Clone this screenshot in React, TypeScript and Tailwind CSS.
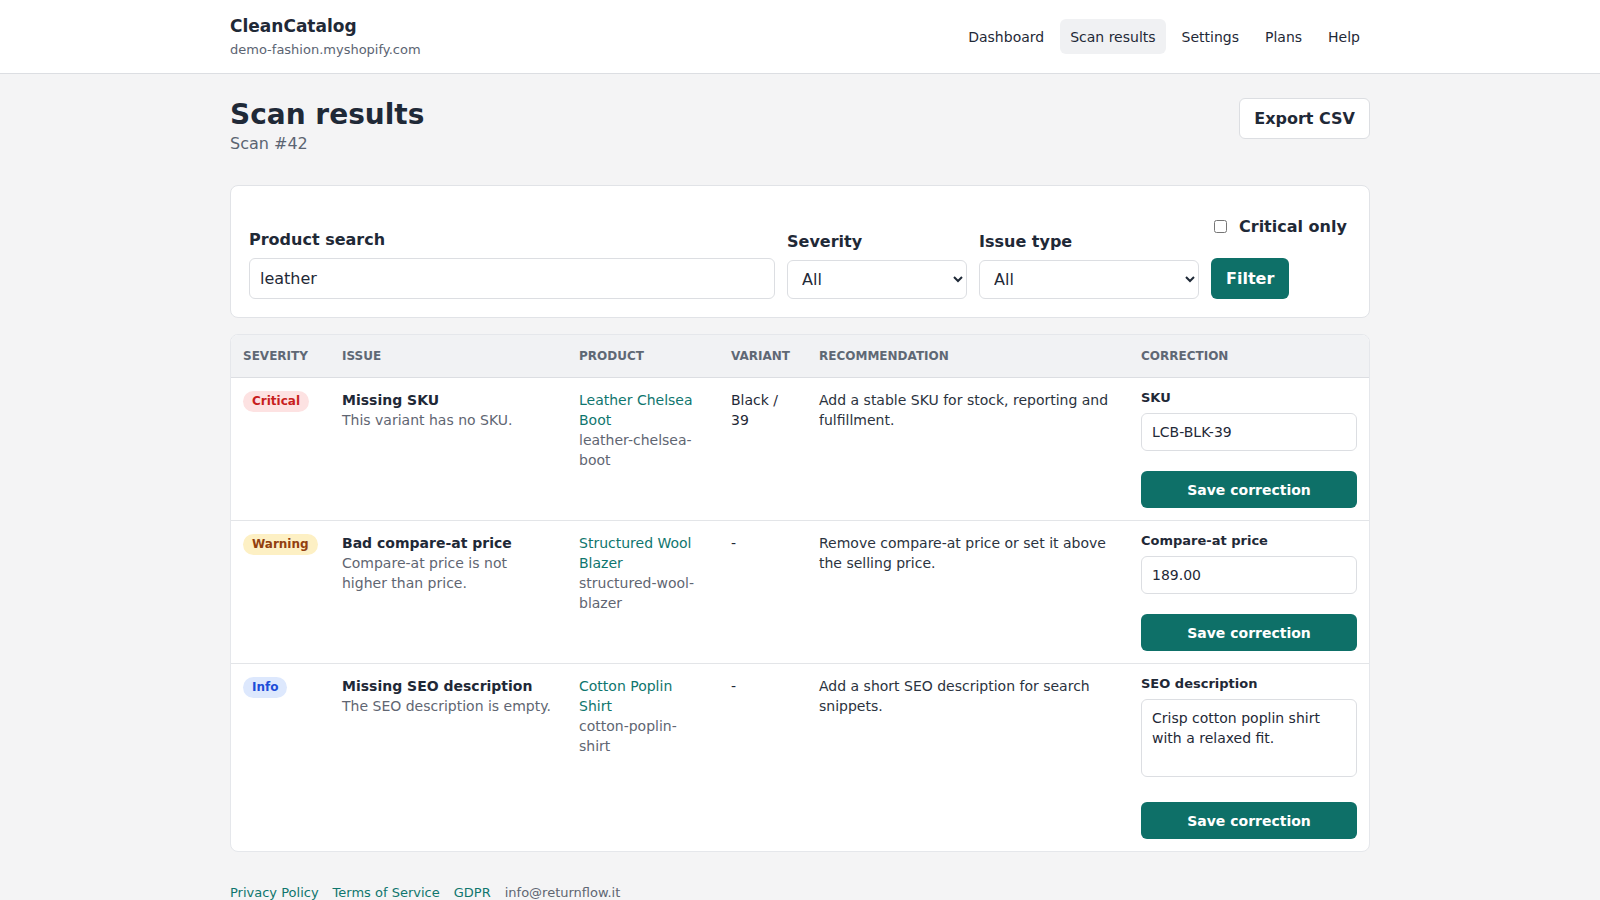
import React from 'react';

type Row = {
  severity: 'Critical' | 'Warning' | 'Info';
  issue: string;
  detail: string;
  product: string;
  handle: string;
  variant: string;
  recommendation: string;
  field: string;
  value: string;
  multiline?: boolean;
};

const rows: Row[] = [
  {
    severity: 'Critical',
    issue: 'Missing SKU',
    detail: 'This variant has no SKU.',
    product: 'Leather Chelsea Boot',
    handle: 'leather-chelsea-boot',
    variant: 'Black / 39',
    recommendation: 'Add a stable SKU for stock, reporting and fulfillment.',
    field: 'SKU',
    value: 'LCB-BLK-39',
  },
  {
    severity: 'Warning',
    issue: 'Bad compare-at price',
    detail: 'Compare-at price is not higher than price.',
    product: 'Structured Wool Blazer',
    handle: 'structured-wool-blazer',
    variant: '-',
    recommendation: 'Remove compare-at price or set it above the selling price.',
    field: 'Compare-at price',
    value: '189.00',
  },
  {
    severity: 'Info',
    issue: 'Missing SEO description',
    detail: 'The SEO description is empty.',
    product: 'Cotton Poplin Shirt',
    handle: 'cotton-poplin-shirt',
    variant: '-',
    recommendation: 'Add a short SEO description for search snippets.',
    field: 'SEO description',
    value: 'Crisp cotton poplin shirt with a relaxed fit.',
    multiline: true,
  },
];

const badgeStyles: Record<Row['severity'], string> = {
  Critical: 'bg-[#fde2e2] text-[#c81e1e]',
  Warning: 'bg-[#fdf0c4] text-[#92400e]',
  Info: 'bg-[#dde8fd] text-[#1d4ed8]',
};

const navItems = ['Dashboard', 'Scan results', 'Settings', 'Plans', 'Help'];

function SeverityBadge({ level }: { level: Row['severity'] }) {
  return (
    <div className="flex pt-px">
      <span className={`rounded-full px-[9px] py-[3px] text-xs font-bold leading-[15px] ${badgeStyles[level]}`}>
        {level}
      </span>
    </div>
  );
}

export default function App() {
  return (
    <div className="min-h-screen bg-[#f4f4f5] font-['DejaVu_Sans',sans-serif] text-[#1f2937]">
      <header className="border-b border-[#dcdee2] bg-white">
        <div className="mx-auto flex h-[73px] max-w-[1140px] items-center justify-between">
          <div>
            <div className="text-[17px] font-bold leading-[22px]">CleanCatalog</div>
            <div className="mt-1 text-[13px] leading-[18px] text-[#5b6472]">demo-fashion.myshopify.com</div>
          </div>
          <nav className="flex items-center gap-1.5">
            {navItems.map((item) => (
              <a
                key={item}
                href="#"
                className={`flex h-[35px] items-center rounded-md px-2.5 text-sm ${
                  item === 'Scan results' ? 'bg-[#f0f1f3]' : ''
                }`}
              >
                {item}
              </a>
            ))}
          </nav>
        </div>
      </header>

      <main className="mx-auto max-w-[1140px] pt-6">
        <div className="flex items-start justify-between">
          <div>
            <h1 className="text-[28px] font-bold leading-[34px]">Scan results</h1>
            <p className="text-base leading-6 text-[#5b6472]">Scan #42</p>
          </div>
          <button className="h-[41px] rounded-md border border-[#dcdee2] bg-white px-[14px] text-base font-bold">
            Export CSV
          </button>
        </div>

        <div className="mt-[29px] flex items-end gap-3 rounded-lg border border-[#e1e3e7] bg-white p-[18px]">
          <div className="flex-1">
            <label className="mb-1.5 block text-base font-bold leading-6">Product search</label>
            <input
              defaultValue="leather"
              className="block h-[41px] w-full rounded-md border border-[#dcdee2] px-2.5 text-base"
            />
          </div>
          <div className="w-[180px]">
            <label className="mb-1.5 block text-base font-bold leading-6">Severity</label>
            <select className="block h-[39px] w-full rounded-md border border-[#dcdee2] bg-white px-2.5 text-base">
              <option>All</option>
            </select>
          </div>
          <div className="w-[220px]">
            <label className="mb-1.5 block text-base font-bold leading-6">Issue type</label>
            <select className="block h-[39px] w-full rounded-md border border-[#dcdee2] bg-white px-2.5 text-base">
              <option>All</option>
            </select>
          </div>
          <div className="flex w-[140px] flex-col">
            <label className="flex h-[45px] items-center gap-3 pl-[3px] text-base font-bold">
              <input type="checkbox" className="m-0 h-[13px] w-[13px]" />
              Critical only
            </label>
            <button className="mt-[9px] h-[41px] self-start rounded-md bg-[#0e7068] px-[15px] text-base font-bold text-white">
              Filter
            </button>
          </div>
        </div>

        <div className="mt-4 overflow-hidden rounded-lg border border-[#e5e7eb] bg-white">
          <table className="w-full table-fixed border-collapse text-left">
            <colgroup>
              <col className="w-[99px]" />
              <col className="w-[237px]" />
              <col className="w-[152px]" />
              <col className="w-[88px]" />
              <col className="w-[322px]" />
              <col className="w-[240px]" />
            </colgroup>
            <thead>
              <tr className="border-b border-[#dcdee2] bg-[#f1f2f4] text-xs font-bold uppercase text-[#5f6875]">
                <th className="px-3 py-[13px] leading-4">Severity</th>
                <th className="px-3 py-[13px] leading-4">Issue</th>
                <th className="px-3 py-[13px] leading-4">Product</th>
                <th className="px-3 py-[13px] leading-4">Variant</th>
                <th className="px-3 py-[13px] leading-4">Recommendation</th>
                <th className="px-3 py-[13px] leading-4">Correction</th>
              </tr>
            </thead>
            <tbody>
              {rows.map((row, i) => (
                <tr key={row.issue} className={i < rows.length - 1 ? 'border-b border-[#e3e5e8]' : ''}>
                  <td className="p-3 align-top">
                    <SeverityBadge level={row.severity} />
                  </td>
                  <td className="p-3 align-top text-sm leading-5">
                    <div className="font-bold">{row.issue}</div>
                    <div className="text-[#5f6672]">{row.detail}</div>
                  </td>
                  <td className="p-3 align-top text-sm leading-5">
                    <a href="#" className="block text-[#0f766e]">{row.product}</a>
                    <div className="text-[#5f6672]">{row.handle}</div>
                  </td>
                  <td className="p-3 align-top text-sm leading-5">{row.variant}</td>
                  <td className="p-3 align-top text-sm leading-5 text-[#2b3340]">{row.recommendation}</td>
                  <td className="p-3 align-top">
                    <label className="mb-2 block text-[13px] font-bold leading-[15px]">{row.field}</label>
                    {row.multiline ? (
                      <textarea
                        rows={3}
                        defaultValue={row.value}
                        className="mb-[25px] block w-full resize-none rounded-md border border-[#dcdee2] px-2.5 py-2 text-sm leading-5"
                      />
                    ) : (
                      <input
                        defaultValue={row.value}
                        className="mb-5 block h-[38px] w-full rounded-md border border-[#dcdee2] px-2.5 text-sm"
                      />
                    )}
                    <button className="h-[37px] w-full rounded-md bg-[#0e7068] text-sm font-bold text-white">
                      Save correction
                    </button>
                  </td>
                </tr>
              ))}
            </tbody>
          </table>
        </div>

        <footer className="mt-8 flex gap-3.5 pb-6 text-[13px] leading-[18px]">
          <a href="#" className="text-[#0f766e]">Privacy Policy</a>
          <a href="#" className="text-[#0f766e]">Terms of Service</a>
          <a href="#" className="text-[#0f766e]">GDPR</a>
          <span className="text-[#5f6672]">info@returnflow.it</span>
        </footer>
      </main>
    </div>
  );
}
